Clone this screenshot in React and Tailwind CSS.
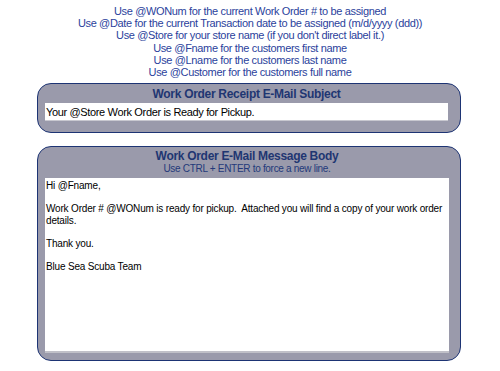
import React from 'react';

const HINTS = [
  'Use @WONum for the current Work Order # to be assigned',
  'Use @Date for the current Transaction date to be assigned (m/d/yyyy (ddd))',
  "Use @Store for your store name (if you don't direct label it.)",
  'Use @Fname for the customers first name',
  'Use @Lname for the customers last name',
  'Use @Customer for the customers full name',
];

const font = { fontFamily: 'Tahoma, "Liberation Sans", Arial, sans-serif' };

const App = () => {
  return (
    <div className="w-[500px] h-[371px] bg-white overflow-hidden" style={font}>
      {/* Hinweise oben */}
      <div className="pt-[5px] text-center text-[11px] tracking-[-0.35px] leading-[12.2px] text-[#2b3f9c]">
        {HINTS.map((h) => (
          <div key={h}>{h}</div>
        ))}
      </div>

      {/* Betreff */}
      <div className="ml-[37px] mt-[5px] w-[424px] h-[50px] rounded-[14px] border-[1.5px] border-[#1d3474] bg-[#9a9aab] pl-[7px] pr-[12px]">
        <div className="text-center text-[12px] tracking-[-0.3px] font-bold text-[#1f3672] leading-[18px] pt-[1px]">
          Work Order Receipt E-Mail Subject
        </div>
        <div className="h-[18px] bg-white border-b border-[#c8c8d0] text-[11px] tracking-[-0.35px] leading-[18px] text-black pl-[1px]">
          Your @Store Work Order is Ready for Pickup.
        </div>
      </div>

      {/* Nachricht */}
      <div className="ml-[37px] mt-[13px] w-[424px] h-[215px] rounded-[14px] border-[1.5px] border-[#1d3474] bg-[#9a9aab] pl-[7px] pr-[11px] pb-[7px] flex flex-col">
        <div className="text-center text-[12px] tracking-[-0.3px] font-bold text-[#1f3672] leading-[14px] pt-[2px]">
          Work Order E-Mail Message Body
        </div>
        <div className="text-center text-[10px] tracking-[-0.3px] text-[#23397a] leading-[12px] mb-[3px]">
          Use CTRL + ENTER to force a new line.
        </div>
        <div className="flex-1 bg-white border-b-2 border-[#c0c0c8] text-[10px] tracking-[-0.18px] leading-[11.5px] text-black pl-[1px] pt-[2px]">
          <div>Hi @Fname,</div>
          <div>&nbsp;</div>
          <div>Work Order # @WONum is ready for pickup.&nbsp; Attached you will find a copy of your work order details.</div>
          <div>&nbsp;</div>
          <div>Thank you.</div>
          <div>&nbsp;</div>
          <div>Blue Sea Scuba Team</div>
        </div>
      </div>
    </div>
  );
};

export default App;
